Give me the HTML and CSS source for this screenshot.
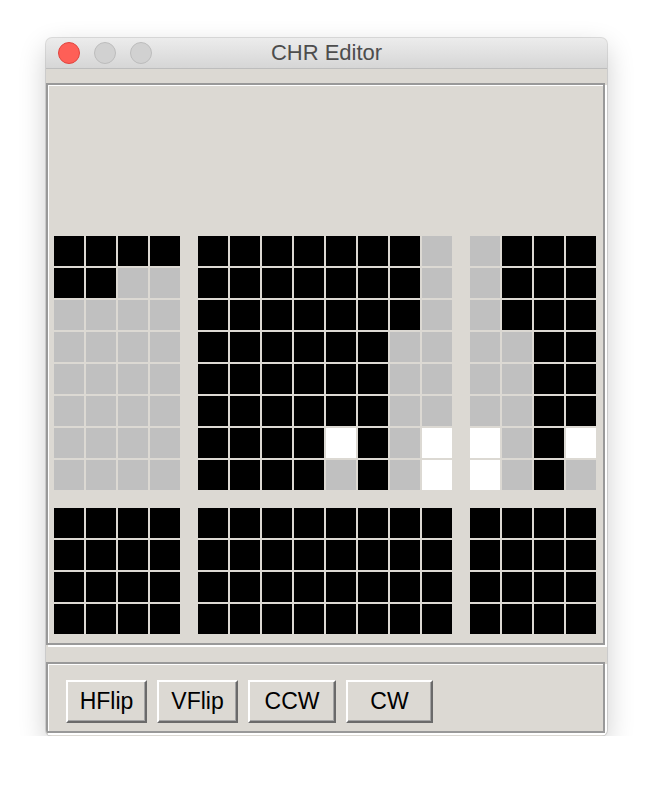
FILE: index.html
```html
<!DOCTYPE html>
<html>
<head>
<meta charset="utf-8">
<title>CHR Editor</title>
<link rel="stylesheet" href="styles.css">
</head>
<body>
<div class="stage">
  <div class="window">
    <div class="titlebar">
      <div class="lights">
        <span class="light red"></span>
        <span class="light gray"></span>
        <span class="light gray"></span>
      </div>
      <div class="title">CHR Editor</div>
    </div>
    <div class="content">
      <div class="panel top-panel">
        <div class="tiles">
          <div class="block c4">
            <i class="b"></i><i class="b"></i><i class="b"></i><i class="b"></i>
            <i class="b"></i><i class="b"></i><i class="g"></i><i class="g"></i>
            <i class="g"></i><i class="g"></i><i class="g"></i><i class="g"></i>
            <i class="g"></i><i class="g"></i><i class="g"></i><i class="g"></i>
            <i class="g"></i><i class="g"></i><i class="g"></i><i class="g"></i>
            <i class="g"></i><i class="g"></i><i class="g"></i><i class="g"></i>
            <i class="g"></i><i class="g"></i><i class="g"></i><i class="g"></i>
            <i class="g"></i><i class="g"></i><i class="g"></i><i class="g"></i>
          </div>
          <div class="block c8">
            <i class="b"></i><i class="b"></i><i class="b"></i><i class="b"></i><i class="b"></i><i class="b"></i><i class="b"></i><i class="g"></i>
            <i class="b"></i><i class="b"></i><i class="b"></i><i class="b"></i><i class="b"></i><i class="b"></i><i class="b"></i><i class="g"></i>
            <i class="b"></i><i class="b"></i><i class="b"></i><i class="b"></i><i class="b"></i><i class="b"></i><i class="b"></i><i class="g"></i>
            <i class="b"></i><i class="b"></i><i class="b"></i><i class="b"></i><i class="b"></i><i class="b"></i><i class="g"></i><i class="g"></i>
            <i class="b"></i><i class="b"></i><i class="b"></i><i class="b"></i><i class="b"></i><i class="b"></i><i class="g"></i><i class="g"></i>
            <i class="b"></i><i class="b"></i><i class="b"></i><i class="b"></i><i class="b"></i><i class="b"></i><i class="g"></i><i class="g"></i>
            <i class="b"></i><i class="b"></i><i class="b"></i><i class="b"></i><i class="w"></i><i class="b"></i><i class="g"></i><i class="w"></i>
            <i class="b"></i><i class="b"></i><i class="b"></i><i class="b"></i><i class="g"></i><i class="b"></i><i class="g"></i><i class="w"></i>
          </div>
          <div class="block c4">
            <i class="g"></i><i class="b"></i><i class="b"></i><i class="b"></i>
            <i class="g"></i><i class="b"></i><i class="b"></i><i class="b"></i>
            <i class="g"></i><i class="b"></i><i class="b"></i><i class="b"></i>
            <i class="g"></i><i class="g"></i><i class="b"></i><i class="b"></i>
            <i class="g"></i><i class="g"></i><i class="b"></i><i class="b"></i>
            <i class="g"></i><i class="g"></i><i class="b"></i><i class="b"></i>
            <i class="w"></i><i class="g"></i><i class="b"></i><i class="w"></i>
            <i class="w"></i><i class="g"></i><i class="b"></i><i class="g"></i>
          </div>
          <div class="block c4">
            <i class="b"></i><i class="b"></i><i class="b"></i><i class="b"></i>
            <i class="b"></i><i class="b"></i><i class="b"></i><i class="b"></i>
            <i class="b"></i><i class="b"></i><i class="b"></i><i class="b"></i>
            <i class="b"></i><i class="b"></i><i class="b"></i><i class="b"></i>
          </div>
          <div class="block c8">
            <i class="b"></i><i class="b"></i><i class="b"></i><i class="b"></i><i class="b"></i><i class="b"></i><i class="b"></i><i class="b"></i>
            <i class="b"></i><i class="b"></i><i class="b"></i><i class="b"></i><i class="b"></i><i class="b"></i><i class="b"></i><i class="b"></i>
            <i class="b"></i><i class="b"></i><i class="b"></i><i class="b"></i><i class="b"></i><i class="b"></i><i class="b"></i><i class="b"></i>
            <i class="b"></i><i class="b"></i><i class="b"></i><i class="b"></i><i class="b"></i><i class="b"></i><i class="b"></i><i class="b"></i>
          </div>
          <div class="block c4">
            <i class="b"></i><i class="b"></i><i class="b"></i><i class="b"></i>
            <i class="b"></i><i class="b"></i><i class="b"></i><i class="b"></i>
            <i class="b"></i><i class="b"></i><i class="b"></i><i class="b"></i>
            <i class="b"></i><i class="b"></i><i class="b"></i><i class="b"></i>
          </div>
        </div>
      </div>
      <div class="panel bottom-panel">
        <button class="btn w81">HFlip</button>
        <button class="btn w81">VFlip</button>
        <button class="btn w88">CCW</button>
        <button class="btn w87">CW</button>
      </div>
    </div>
  </div>
</div>
</body>
</html>
```
FILE: styles.css
```css
html, body {
  margin: 0;
  padding: 0;
  background: #ffffff;
}
.stage {
  padding: 38px 0 0 46px;
}
.window {
  width: 561px;
  height: 698px;
  border-radius: 6px;
  overflow: hidden;
  background: #dcd9d3;
  box-shadow: 0 0 0 1px rgba(0,0,0,0.12), 0 10px 28px rgba(0,0,0,0.2);
  display: flex;
  flex-direction: column;
}
.titlebar {
  height: 30px;
  border-bottom: 1px solid #bdbdbd;
  background: linear-gradient(#ececec, #d6d6d6);
  display: flex;
  align-items: center;
  position: relative;
}
.lights {
  display: flex;
  gap: 14px;
  padding-left: 12px;
}
.light {
  width: 22px;
  height: 22px;
  border-radius: 50%;
  box-sizing: border-box;
}
.light.red {
  background: #fe5f57;
  border: 1px solid #e0443e;
}
.light.gray {
  background: #d1d1d1;
  border: 1px solid #bcbcbc;
}
.title {
  position: absolute;
  left: 0;
  right: 0;
  top: 0;
  bottom: 0;
  display: flex;
  align-items: center;
  justify-content: center;
  font-family: "Liberation Sans", Arial, sans-serif;
  font-size: 22px;
  color: #4d4d4d;
  pointer-events: none;
}
.content {
  padding-top: 14px;
  display: flex;
  flex-direction: column;
}
.panel {
  width: 559px;
  box-sizing: border-box;
  border: 2px solid #999999;
  box-shadow: inset 1px 1px 0 #ffffff, 2px 2px 0 #ffffff;
}
.top-panel {
  height: 562px;
  padding: 151px 0 0 6px;
}
.tiles {
  display: grid;
  grid-template-columns: auto auto auto;
  column-gap: 18px;
  row-gap: 18px;
  justify-content: start;
}
.block {
  display: grid;
  grid-auto-rows: 30px;
  gap: 2px;
}
.block.c4 {
  grid-template-columns: repeat(4, 30px);
}
.block.c8 {
  grid-template-columns: repeat(8, 30px);
}
.block i {
  display: block;
}
.b { background: #000000; }
.g { background: #c0c0c0; }
.w { background: #ffffff; }
.bottom-panel {
  margin-top: 17px;
  height: 71px;
  padding: 16px 0 0 18px;
  display: flex;
  align-items: flex-start;
  gap: 10px;
}
.btn {
  height: 43px;
  margin: 0;
  padding: 0;
  box-sizing: border-box;
  background: #dcd9d3;
  border-top: 2px solid #ffffff;
  border-left: 2px solid #ffffff;
  border-right: 2px solid #6a6a6a;
  border-bottom: 2px solid #6a6a6a;
  box-shadow: inset -1px -1px 0 #a3a3a3;
  font-family: "Liberation Sans", Arial, sans-serif;
  font-size: 23px;
  color: #000000;
  text-align: center;
}
.w81 { width: 81px; }
.w88 { width: 88px; }
.w87 { width: 87px; }
```
